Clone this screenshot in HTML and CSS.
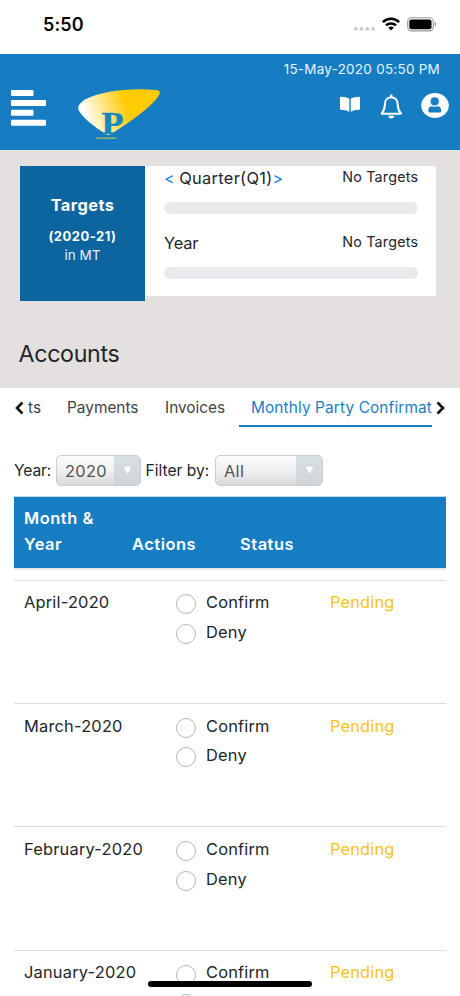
FILE: index.html
```html
<!DOCTYPE html>
<html lang="en">
<head>
<meta charset="utf-8">
<title>Accounts</title>
<link rel="stylesheet" href="styles.css">
</head>
<body>
<div class="phone">
  <div class="statusbar">
    <span class="clock">5:50</span>
    <svg class="dots" width="22" height="4" viewBox="0 0 22 4" fill="#c8c8c8"><rect y=".3" width="3.500" height="3.200" rx="1.200"/><rect x="5.800" y=".3" width="3.500" height="3.200" rx="1.200"/><rect x="11.600" y=".3" width="3.500" height="3.200" rx="1.200"/><rect x="17.400" y=".3" width="3.500" height="3.200" rx="1.200"/></svg>
    <svg class="wifi" width="18" height="14" viewBox="0 0 18 14"><g fill="none" stroke="#000" stroke-width="2.500"><path d="M.9 5.100a11.600 11.600 0 0 1 16.200 0"/><path d="M4 8.400a7.200 7.200 0 0 1 10 0"/></g><path d="M6.200 10.800a4.100 4.100 0 0 1 5.600 0L9 13.600z"/></svg>
    <svg class="battery" width="30" height="15" viewBox="0 0 30 15"><rect x=".7" y=".7" width="25.600" height="13.200" rx="3.800" fill="none" stroke="#999" stroke-width="1.100"/><rect x="2.300" y="2.400" width="22.200" height="9.800" rx="2"/><path d="M27.600 5v4.600c1-.300 1.600-1.200 1.600-2.300S28.600 5.300 27.600 5z" fill="#999"/></svg>
  </div>

  <header class="header">
    <svg class="menu" width="35" height="36" viewBox="0 0 35 36" fill="#fff"><rect width="22.500" height="6" rx="1"/><rect y="10" width="35" height="6" rx="1"/><rect y="19.800" width="22.500" height="6" rx="1"/><rect y="29.800" width="35" height="6" rx="1"/></svg>
    <svg class="logo" width="84" height="52" viewBox="0 0 84 52">
      <defs><linearGradient id="fan" x1="0" y1=".6" x2="1" y2=".4"><stop offset="0" stop-color="#fff"/><stop offset=".1" stop-color="#fffdf5"/><stop offset=".62" stop-color="#ffcb05"/><stop offset="1" stop-color="#ffcb05"/></linearGradient></defs>
      <path d="M8 11C25 3 52-.500 79.500 2.300q3.500.500 1.800 4.300C75 18 55 32 32.500 46.600q-2.500 1-5-.500C17 39 4 29.500.300 21.500-.400 18 2 14.500 8 11z" fill="url(#fan)"/>
      <text class="logo-letter" x="23.500" y="46" textLength="22" lengthAdjust="spacingAndGlyphs">P</text>
      <path d="M18.500 50.200h20" stroke="#b3b94e" stroke-width="1.300"/>
    </svg>
    <div class="header-right">
      <div class="datetime">15-May-2020 05:50 PM</div>
      <div class="header-icons">
        <svg class="book" width="20" height="17" viewBox="0 0 20 17" fill="#fff"><path d="M.9.700Q6 .700 9.300 2.500v13.300Q6 13.800.9 13.700q-.9 0-.9-1V1.500Q0 .700.900.700z"/><path d="M19.100.700Q14 .700 10.700 2.500v13.300q3.300-2 8.400-2.100.9 0 .9-1V1.500q0-.800-.9-.800z"/></svg>
        <svg class="bell" width="23" height="26" viewBox="0 0 23 26"><path d="M11.300 3.200c-4.300 0-6.400 3.300-6.400 7.200 0 5-1.200 6.600-3.300 9.300h19.400c-2.100-2.700-3.300-4.300-3.300-9.300 0-3.900-2.100-7.200-6.400-7.200z" fill="none" stroke="#fff" stroke-width="2" stroke-linejoin="round"/><path d="M10.100 3V1.500a1.200 1.200 0 0 1 2.400 0V3zM8.200 21.700h6.200c-.3 1.700-1.400 2.800-3.100 2.800s-2.800-1.100-3.100-2.800z" fill="#fff"/></svg>
        <svg class="user" width="28" height="25" viewBox="0 0 28 25"><ellipse cx="14" cy="12.500" rx="13.800" ry="12.400" fill="#fff"/><g fill="#167dc2"><circle cx="13.700" cy="8.400" r="4.100"/><path d="M7.300 17.300c0-2.700 1.600-4 4-4q2.500 1 4.900 0c2.400 0 4 1.300 4 4 0 1.400-.3 2.300-1.600 2.300H8.900c-1.300 0-1.600-.900-1.600-2.300z"/></g></svg>
      </div>
    </div>
  </header>

  <section class="summary">
    <div class="targets">
      <div class="targets-label">
        <div class="targets-title">Targets</div>
        <div class="targets-year">(2020-21)</div>
        <div class="targets-unit">in MT</div>
      </div>
      <div class="targets-data">
        <div class="target-row"><span><span class="step prev">&lt;</span> <span class="quarter">Quarter(Q1)</span><span class="step">&gt;</span></span><span class="none">No Targets</span></div>
        <div class="bar"></div>
        <div class="target-row second"><span class="year">Year</span><span class="none">No Targets</span></div>
        <div class="bar"></div>
      </div>
    </div>
    <h1 class="title">Accounts</h1>
  </section>

  <nav class="tabs">
    <svg class="chev" width="10" height="14" viewBox="0 0 10 14"><path d="M8.500 1.500 3 7 8.500 12.500" fill="none" stroke="#111" stroke-width="2.600"/></svg>
    <div class="tab-strip">
      <span class="tab cut">ts</span><span class="tab pay">Payments</span><span class="tab inv">Invoices</span><span class="tab active">Monthly Party Confirmat</span>
    </div>
    <svg class="chev" width="10" height="14" viewBox="0 0 10 14"><path d="M1.500 1.500 7 7 1.500 12.500" fill="none" stroke="#111" stroke-width="2.600"/></svg>
  </nav>

  <div class="filters">
    <span class="flabel yl">Year:</span>
    <div class="select s-year"><span class="value">2020</span><span class="arrow"><svg width="9" height="9" viewBox="0 0 9 9"><path d="M.8.800h7.400L4.500 8z" fill="#fff"/></svg></span></div>
    <span class="flabel fl">Filter by:</span>
    <div class="select s-all"><span class="value all">All</span><span class="arrow"><svg width="9" height="9" viewBox="0 0 9 9"><path d="M.8.800h7.400L4.500 8z" fill="#fff"/></svg></span></div>
  </div>

  <div class="table">
    <div class="thead"><span>Month &amp;<br>Year</span><span>Actions</span><span>Status</span><span></span></div>
    <div class="row"><span class="month">April-2020</span><div class="actions"><label><i></i>Confirm</label><label><i></i>Deny</label></div><span class="status">Pending</span></div>
    <div class="row"><span class="month">March-2020</span><div class="actions"><label><i></i>Confirm</label><label><i></i>Deny</label></div><span class="status">Pending</span></div>
    <div class="row"><span class="month">February-2020</span><div class="actions"><label><i></i>Confirm</label><label><i></i>Deny</label></div><span class="status">Pending</span></div>
    <div class="row"><span class="month">January-2020</span><div class="actions"><label><i></i>Confirm</label><label><i></i></label></div><span class="status">Pending</span></div>
  </div>
  <div class="home"></div>
</div>
</body>
</html>
```
FILE: styles.css
```css
* { box-sizing: border-box; }
html, body { margin: 0; height: 996px; overflow: hidden; }
body { font-family: Inter, "Liberation Sans", sans-serif; font-size: 16.4px; color: #212529; background: #fff; }
svg { display: block; flex: none; }
.phone { position: relative; width: 460px; height: 996px; overflow: hidden; }

.statusbar { display: flex; height: 54px; padding: 0 23px 0 43px; align-items: flex-start; }
.clock { margin-top: 13px; line-height: 24px; font-size: 18px; font-weight: 600; color: #000; letter-spacing: .1px; margin-right: auto; }
.dots { margin: 27px 6px 0 0; }
.wifi { margin: 17px 7px 0 0; }
.battery { margin-top: 17px; }

.header { display: flex; height: 96px; background: #167dc2; padding: 0 11px; }
.menu { margin-top: 36px; }
.logo { margin: 34px 0 0 32px; overflow: visible; }
.logo-letter { font: bold 31px "Liberation Serif", serif; fill: #1489bd; stroke: #1489bd; stroke-width: .5px; }
.header-right { margin-left: auto; display: flex; flex-direction: column; align-items: flex-end; }
.datetime { margin: 5px 9px 0 0; line-height: 20px; font-size: 13.4px; letter-spacing: .3px; color: #e6f5ff; white-space: nowrap; }
.header-icons { display: flex; align-items: flex-start; margin-top: 14px; }
.book { margin: 3px 20px 0 0; }
.bell { margin: 1px 18.500px 0 0; }

.summary { height: 238px; background: #e4e0df; padding: 16px 24px 0 20px; }
.targets { display: flex; height: 135px; }
.targets-label { width: 125px; background: #0d65a0; color: #fff; text-align: center; padding-top: 26px; }
.targets-title { font-weight: 700; font-size: 16.4px; line-height: 26px; letter-spacing: .4px; }
.targets-year { font-weight: 700; font-size: 13px; line-height: 18px; margin-top: 8.500px; letter-spacing: .5px; }
.targets-unit { font-size: 13.6px; line-height: 20px; color: #e3f2fc; }
.targets-data { flex: 1; height: 130px; background: #fff; padding: 0 18px 0 19px; }
.target-row { display: flex; justify-content: space-between; height: 36px; line-height: 25px; white-space: nowrap; }
.target-row.second { height: 53px; padding-top: 17px; }
.step { color: #1b86e8; font-size: 16px; }
.quarter { letter-spacing: .3px; }
.year { letter-spacing: -.2px; }
.none { font-size: 14.3px; line-height: 22px; letter-spacing: .2px; margin-right: -.2px; }
.bar { height: 12px; border-radius: 6px; background: #e9eaed; }
.title { margin: 38px 0 0 -1.500px; font-weight: 400; font-size: 23.2px; line-height: 30px; letter-spacing: -.3px; }

.tabs { display: flex; align-items: flex-start; height: 67px; padding: 0 14px; }
.chev { margin-top: 13px; }
.tab-strip { display: flex; flex: 1; min-width: 0; margin: 0 4px; height: 39px; }
.tab { flex: none; font-size: 15.4px; line-height: 40px; white-space: nowrap; color: #444; }
.cut { width: 39px; }
.pay { width: 98px; }
.inv { width: 74px; }
.active { width: 193px; color: #1b7fc0; border-bottom: 2.500px solid #167dc2; padding-left: 12px; letter-spacing: .12px; }

.filters { display: flex; height: 41.500px; padding-left: 14px; align-items: flex-start; }
.flabel { font-size: 15.6px; line-height: 32px; white-space: nowrap; }
.yl { width: 41.500px; letter-spacing: -.1px; }
.fl { width: 69px; margin-left: 4.500px; }
.select { display: flex; height: 31px; border: 1px solid #c9ced2; border-radius: 5px; overflow: hidden; background: linear-gradient(#fafafa, #f2f2f2 45%, #d9d9d9); }
.s-year { width: 85.500px; }
.s-all { width: 108.500px; }
.value { flex: 1; padding-left: 8.500px; line-height: 30px; color: #555; font-size: 16.4px; letter-spacing: .3px; }
.arrow { width: 26px; background: linear-gradient(#d7dfe4, #d0d5d9); display: flex; justify-content: center; padding-top: 10px; }

.table { margin: 0 14px; }
.thead { display: grid; grid-template-columns: repeat(4, 1fr); align-items: end; height: 71px; background: #167dc2; color: #fff; font-weight: 600; line-height: 26px; letter-spacing: .55px; padding-bottom: 11px; box-shadow: 0 2px 0 #e0eaf0, 0 -1px 0 #b9dbf0; margin-bottom: 12px; }
.thead span { padding-left: 10px; white-space: nowrap; }
.row { display: grid; grid-template-columns: 163px 153px 1fr; height: 123.400px; border-top: 1px solid #dcdfe1; padding-top: 9.800px; line-height: 25px; white-space: nowrap; }
.month { padding-left: 10px; letter-spacing: .2px; }
.actions { display: flex; flex-direction: column; letter-spacing: .15px; }
.actions label { display: flex; height: 29.600px; }
.actions i { width: 20px; height: 20px; margin: 4.200px 9.800px 0 -.7px; border: 1px solid #b2b6b9; border-radius: 50%; flex: none; }
.status { color: #fcc218; letter-spacing: .15px; }
.home { position: absolute; left: 148px; top: 981px; width: 164px; height: 6px; border-radius: 3px; background: #000; }
```
